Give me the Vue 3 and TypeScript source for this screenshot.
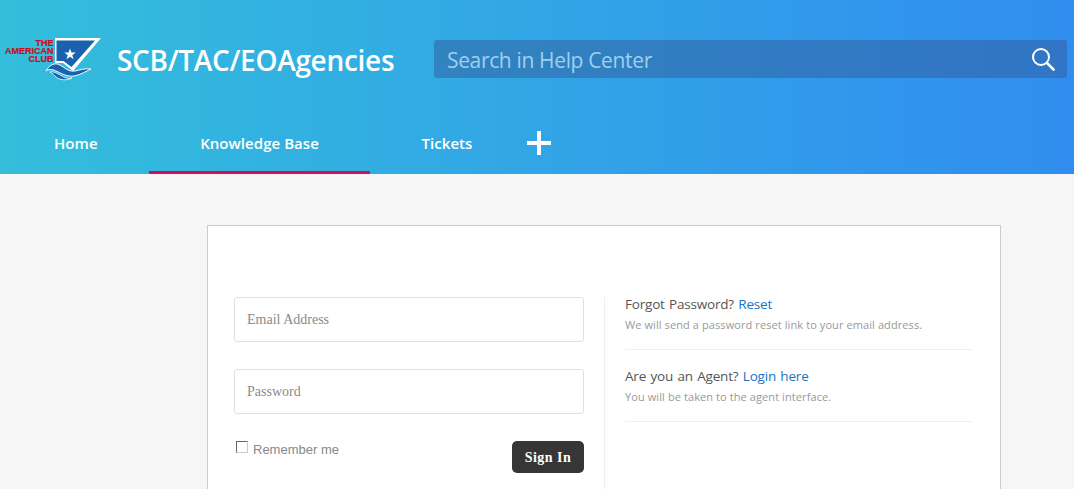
<script setup lang="ts">
const tabs: { label: string; active?: boolean; cls: string }[] = [
  { label: 'Home', cls: 'tab-home' },
  { label: 'Knowledge Base', active: true, cls: 'tab-kb' },
  { label: 'Tickets', cls: 'tab-tickets' },
]
</script>

<template>
  <div class="page">
    <header class="hero">
      <div class="top">
        <div class="brand">
          <svg class="logo" width="104" height="48" viewBox="0 36 104 48">
            <path d="M55 38H101L73 71L63 63H55Z" fill="#fff" />
            <path d="M56.500 40.500H95L71.500 67L63.500 61H56.500Z" fill="#1a62ae" />
            <path d="M70 48.500l1.500 4 4.200.1-3.400 2.600 1.300 4.100-3.600-2.500-3.500 2.500 1.200-4.100-3.300-2.600 4.200-.1z" fill="#fff" />
            <path d="M46 71C49 65 55 62 60 65C65 68 69 72 75 71C80 70 85 68 91 69C86 71 81 75 74 76C66 77 61 73 56 71C52 69 48 69 46 71Z" fill="#1a62ae" stroke="#fff" stroke-width="1" />
            <path d="M50 72C54 71 58 74 62 76C65 78 69 79 72 78C66 81 60 80 56 77C54 75 52 73 50 72Z" fill="#1a62ae" stroke="#fff" stroke-width=".8" />
            <g class="logo-text" text-anchor="end" fill="#c4101c" stroke="#c4101c" stroke-width=".2">
              <text x="53.500" y="45.500">THE</text>
              <text x="53.500" y="53.500">AMERICAN</text>
              <text x="53.500" y="61.500">CLUB</text>
            </g>
          </svg>
          <span class="title">SCB/TAC/EOAgencies</span>
        </div>
        <div class="search">
          <span class="search-text">Search in Help Center</span>
          <svg class="search-icon" width="24" height="24" viewBox="0 0 24 24" fill="none" stroke="#fff">
            <circle cx="10" cy="10" r="8" stroke-width="2" />
            <path d="M16 16l6.500 6.500" stroke-width="2.600" stroke-linecap="round" />
          </svg>
        </div>
      </div>
      <nav class="nav">
        <a v-for="t in tabs" :key="t.label" class="tab" :class="[t.cls, { active: t.active }]">{{ t.label }}</a>
        <svg class="plus" width="24" height="24" viewBox="0 0 24 24"><path d="M0 12H24M12 0V24" stroke="#fff" stroke-width="4" /></svg>
      </nav>
    </header>

    <main class="main">
      <section class="card">
        <form class="form" @submit.prevent>
          <input class="field" type="text" placeholder="Email Address" />
          <input class="field second" type="password" placeholder="Password" />
          <div class="actions">
            <label class="remember">
              <span class="check"></span>
              <span>Remember me</span>
            </label>
            <button class="signin" type="submit">Sign In</button>
          </div>
        </form>
        <aside class="side">
          <div class="block">
            <p class="lead">Forgot Password? <a>Reset</a></p>
            <p class="note">We will send a password reset link to your email address.</p>
          </div>
          <div class="block">
            <p class="lead">Are you an Agent? <a>Login here</a></p>
            <p class="note">You will be taken to the agent interface.</p>
          </div>
        </aside>
      </section>
    </main>
  </div>
</template>

<style>
html, body { margin: 0; height: 489px; overflow: hidden; background: #f6f6f6; }
</style>

<style scoped>
.page { height: 489px; overflow: hidden; font-family: "Open Sans", "Noto Sans", sans-serif; }
.hero { height: 174px; background: linear-gradient(90deg, #33bedb 0%, #308df0 100%); color: #fff; box-sizing: border-box; }
.top { display: flex; align-items: flex-start; height: 112px; }
.brand { display: flex; align-items: center; width: 434px; height: 48px; margin-top: 36px; }
.logo { flex: none; }
.logo-text { font: 700 9px "Liberation Sans", sans-serif; }
.title { margin-left: 13px; font-size: 28px; font-weight: 600; letter-spacing: -0.3px; white-space: nowrap; }
.search { width: 633px; height: 38px; margin-top: 40px; padding: 0 12px 0 13px; box-sizing: border-box; display: flex; align-items: center; justify-content: space-between; background: rgba(50, 92, 155, 0.5); border-radius: 3px; }
.search-text { font-size: 21px; color: #9fd0ee; letter-spacing: -0.35px; padding-top: 2px; }
.nav { display: flex; align-items: stretch; height: 62px; }
.tab { display: flex; align-items: center; justify-content: center; box-sizing: border-box; height: 62px; font-size: 15px; font-weight: 600; color: #fff; letter-spacing: 0.05px; }
.tab-home { width: 149px; justify-content: flex-start; padding-left: 54px; }
.tab-kb { width: 221px; }
.tab-tickets { width: 152px; padding-left: 2px; }
.tab.active { border-bottom: 3px solid #dc0a56; padding-top: 3px; }
.plus { margin: 19px 0 0 5px; }
.main { padding: 51px 73px 0 207px; }
.card { display: flex; box-sizing: border-box; width: 794px; height: 300px; background: #fff; border: 1px solid #ccc; padding: 71px 26px 0; }
.form { width: 350px; flex: none; padding-right: 20px; border-right: 1px solid #eee; }
.field { display: block; width: 350px; height: 45px; box-sizing: border-box; padding: 0 12px; font: 14px "Liberation Serif", serif; border: 1px solid #e0e0e0; border-radius: 3px; background: #fff; outline: none; }
.field::placeholder { color: #8a8a8a; opacity: 1; }
.second { margin-top: 27px; }
.actions { display: flex; justify-content: space-between; margin-top: 27px; width: 350px; }
.remember { display: flex; align-items: flex-start; gap: 5px; font: 13px "Liberation Sans", sans-serif; color: #888; }
.remember > span:last-child { margin-top: 1px; }
.check { width: 10px; height: 10px; border: 1px solid #666; border-right-color: #ccc; border-bottom-color: #ccc; margin-left: 2px; }
.signin { width: 72px; height: 32px; border: 0; border-radius: 5px; background: #363636; color: #fff; font: 700 14px "Liberation Serif", serif; letter-spacing: 0.5px; padding-top: 3px; }
.side { width: 348px; margin-left: 20px; margin-top: -2px; }
.block { height: 54px; border-bottom: 1px solid #f0f0f0; margin-bottom: 17px; }
.lead { margin: 0; font-size: 13.5px; line-height: 18px; color: #555; letter-spacing: -0.2px; word-spacing: 1.1px; white-space: nowrap; }
.lead a { color: #1574c4; }
.note { margin: 4px 0 0; font-size: 11px; line-height: 16px; color: #999; letter-spacing: 0.09px; white-space: nowrap; }
</style>
